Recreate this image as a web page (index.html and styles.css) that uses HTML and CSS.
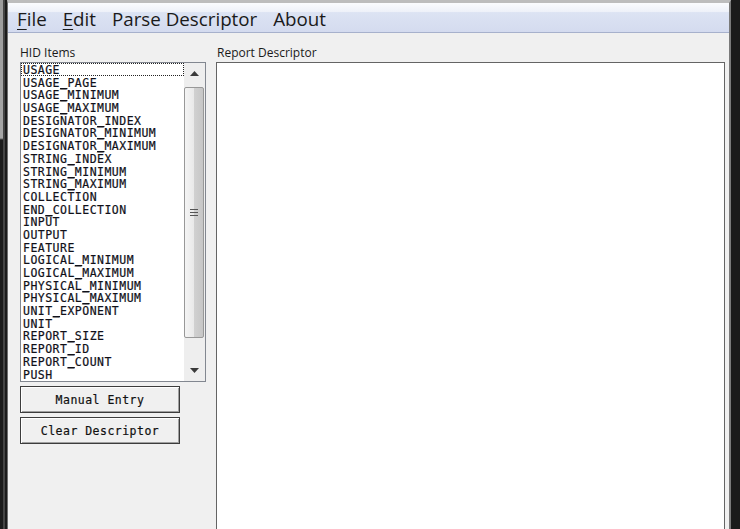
FILE: index.html
```html
<!DOCTYPE html>
<html>
<head>
<meta charset="utf-8">
<title>HID Descriptor Tool</title>
<link rel="stylesheet" href="styles.css">
</head>
<body>
<div class="window">
  <nav class="menubar">
    <span class="menu-item"><span class="ak">F</span>ile</span>
    <span class="menu-item"><span class="ak">E</span>dit</span>
    <span class="menu-item">Parse Descriptor</span>
    <span class="menu-item">About</span>
  </nav>
  <div class="client">
    <section class="left">
      <div class="label">HID Items</div>
      <div class="listbox">
        <ul class="items">
          <li class="focused">USAGE</li>
          <li>USAGE<span class="u">_</span>PAGE</li>
          <li>USAGE<span class="u">_</span>MINIMUM</li>
          <li>USAGE<span class="u">_</span>MAXIMUM</li>
          <li>DESIGNATOR<span class="u">_</span>INDEX</li>
          <li>DESIGNATOR<span class="u">_</span>MINIMUM</li>
          <li>DESIGNATOR<span class="u">_</span>MAXIMUM</li>
          <li>STRING<span class="u">_</span>INDEX</li>
          <li>STRING<span class="u">_</span>MINIMUM</li>
          <li>STRING<span class="u">_</span>MAXIMUM</li>
          <li>COLLECTION</li>
          <li>END<span class="u">_</span>COLLECTION</li>
          <li>INPUT</li>
          <li>OUTPUT</li>
          <li>FEATURE</li>
          <li>LOGICAL<span class="u">_</span>MINIMUM</li>
          <li>LOGICAL<span class="u">_</span>MAXIMUM</li>
          <li>PHYSICAL<span class="u">_</span>MINIMUM</li>
          <li>PHYSICAL<span class="u">_</span>MAXIMUM</li>
          <li>UNIT<span class="u">_</span>EXPONENT</li>
          <li>UNIT</li>
          <li>REPORT<span class="u">_</span>SIZE</li>
          <li>REPORT<span class="u">_</span>ID</li>
          <li>REPORT<span class="u">_</span>COUNT</li>
          <li>PUSH</li>
        </ul>
        <div class="scrollbar">
          <div class="sb-btn"><svg width="9" height="5" viewBox="0 0 9 5"><polygon points="0,5 9,5 4.5,0" fill="#3a3a3a"/></svg></div>
          <div class="sb-track">
            <div class="sb-thumb">
              <span class="grip"></span>
            </div>
          </div>
          <div class="sb-btn"><svg width="9" height="5" viewBox="0 0 9 5"><polygon points="0,0 9,0 4.5,5" fill="#3a3a3a"/></svg></div>
        </div>
      </div>
      <button class="btn">Manual Entry</button>
      <button class="btn">Clear Descriptor</button>
    </section>
    <section class="right">
      <div class="label report-label">Report Descriptor</div>
      <div class="report"></div>
    </section>
  </div>
</div>
</body>
</html>
```

FILE: styles.css
```css
html, body {
  margin: 0;
  padding: 0;
  height: 100%;
}

body {
  background:
    linear-gradient(to bottom, #9c9c9c 0, #a6a6a6 138px, #1b1b1b 140px) left top / 3px 100% no-repeat,
    linear-gradient(to right, #1b1b1b 0, #1b1b1b 3px, #444 3px, #444 5px, #1b1b1b 5px) left top / 7px 100% no-repeat,
    #1b1b1b;
  overflow: hidden;
}

.window {
  margin-left: 7px;
  width: 721px;
  height: 526px;
  border-top: 3px solid #bdbdbd;
  border-left: 1px solid #6e6e6e;
  border-right: 2px solid #7a7a7a;
  background: #f0f0f0;
  display: flex;
  flex-direction: column;
  overflow: hidden;
}

.menubar {
  height: 27px;
  padding: 2px 0 0 1px;
  border-bottom: 1px solid #a7b1cc;
  background: linear-gradient(to bottom, #fbfcfe 0%, #eef1f9 30%, #dce3f3 33%, #d4dbef 100%);
  display: flex;
  font-family: "Open Sans", "Noto Sans", sans-serif;
  font-size: 18.75px;
  line-height: 27px;
  color: #1a1a1a;
  flex: none;
}

.menu-item {
  padding: 0 8px;
  white-space: nowrap;
}

.ak {
  text-decoration: underline;
  text-decoration-thickness: 1px;
  text-underline-offset: 3px;
}

.client {
  flex: 1;
  min-height: 0;
  display: flex;
  gap: 10px;
  padding: 12px 4px 0 12px;
}

.label {
  font-family: "Open Sans", "Noto Sans", sans-serif;
  font-size: 12px;
  line-height: 16px;
  height: 16px;
  margin-bottom: 1px;
  color: #1a1a1a;
  white-space: nowrap;
}

.left {
  width: 186px;
  flex: none;
  display: flex;
  flex-direction: column;
}

.listbox {
  height: 320px;
  box-sizing: border-box;
  border: 1px solid #828790;
  background: #fff;
  display: flex;
}

.items {
  flex: 1;
  list-style: none;
  margin: 0;
  padding: 0;
  overflow: hidden;
  font-family: "DejaVu Sans Mono", monospace;
  font-size: 11.5px;
  letter-spacing: 0.48px;
  line-height: 12.7px;
  color: #101018;
  -webkit-text-stroke: 0.2px #101018;
}

.items li {
  padding: 1px 0 0 2px;
  height: 11.7px;
  white-space: nowrap;
}

.items li.focused {
  outline: 1px dotted #222;
  outline-offset: -1px;
}

.u {
  text-decoration: underline;
  text-decoration-thickness: 1px;
  text-underline-offset: 1px;
  text-decoration-skip-ink: none;
}

.scrollbar {
  width: 21px;
  flex: none;
  display: flex;
  flex-direction: column;
  background: #eeeeee;
}

.sb-btn {
  height: 21px;
  flex: none;
  display: flex;
  align-items: center;
  justify-content: center;
}

.sb-track {
  flex: 1;
  padding-top: 3px;
}

.sb-thumb {
  height: 251px;
  margin-right: 1px;
  box-sizing: border-box;
  border: 1px solid #989898;
  border-radius: 2px;
  background: linear-gradient(to right, #f4f4f4 0%, #e9e9e9 48%, #d0d0d0 52%, #c6c6c6 100%);
  display: flex;
  align-items: center;
  justify-content: center;
}

.grip {
  width: 8px;
  height: 7px;
  margin-right: 1px;
  background: linear-gradient(to bottom, #555 0, #555 1px, transparent 1px, transparent 3px, #555 3px, #555 4px, transparent 4px, transparent 6px, #555 6px, #555 7px);
}

.btn {
  width: 160px;
  height: 27px;
  margin-top: 4px;
  padding: 0;
  box-sizing: border-box;
  border: 1px solid #3c3c3c;
  background: #f0f0f0;
  box-shadow: inset 1px 1px 0 #ffffff, inset -1px -1px 0 #a0a0a0;
  font-family: "DejaVu Sans Mono", monospace;
  font-size: 11.5px;
  letter-spacing: 0.48px;
  color: #101010;
  -webkit-text-stroke: 0.2px #101010;
  text-align: center;
}

.right {
  flex: 1;
  min-width: 0;
  display: flex;
  flex-direction: column;
}

.report-label {
  padding-left: 1px;
}

.report {
  height: 480px;
  flex: none;
  border: 1px solid #646464;
  background: #ffffff;
}
```
